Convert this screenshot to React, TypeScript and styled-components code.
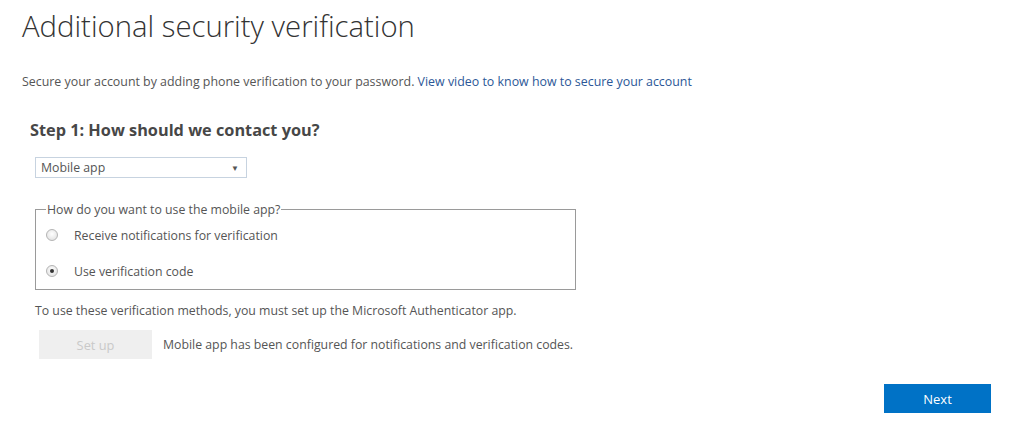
import { ReactElement } from 'react'
import styled, { createGlobalStyle } from 'styled-components'

const GlobalStyle = createGlobalStyle`
  html, body {
    margin: 0;
    padding: 0;
    background: #ffffff;
  }
  body {
    font-family: 'Open Sans', 'Noto Sans', sans-serif;
    color: #444;
    overflow: hidden;
  }
`

function App(): ReactElement {
  return (
    <>
      <GlobalStyle />
      <Page>
        <Title>Additional security verification</Title>
        <Intro>
          Secure your account by adding phone verification to your password.{' '}
          <IntroLink href="#">View video to know how to secure your account</IntroLink>
        </Intro>

        <StepBlock>
          <StepTitle>Step 1: How should we contact you?</StepTitle>
          <SelectBox>
            <span>Mobile app</span>
            <Caret>▼</Caret>
          </SelectBox>

          <MethodSet>
            <legend>How do you want to use the mobile app?</legend>
            <RadioRow>
              <Radio />
              <RadioLabel>Receive notifications for verification</RadioLabel>
            </RadioRow>
            <RadioRow>
              <Radio checked />
              <RadioLabel>Use verification code</RadioLabel>
            </RadioRow>
          </MethodSet>

          <Note>To use these verification methods, you must set up the Microsoft Authenticator app.</Note>

          <SetupRow>
            <SetupButton disabled>Set up</SetupButton>
            <Note>Mobile app has been configured for notifications and verification codes.</Note>
          </SetupRow>
        </StepBlock>

        <Footer>
          <NextButton>Next</NextButton>
        </Footer>
      </Page>
    </>
  )
}

export default App

const Page = styled.div`
  width: 1024px;
  height: 444px;
  padding: 8px 0 0 22px;
  box-sizing: border-box;
`

const Title = styled.h1`
  margin: 0;
  font-size: 29.3px;
  font-weight: 300;
  line-height: 36px;
  color: #333;
`

const Intro = styled.p`
  margin: 30px 0 0;
  font-size: 12.4px;
  line-height: 16px;
  color: #555;
`

const IntroLink = styled.a`
  color: #2b5797;
  text-decoration: none;
`

const StepBlock = styled.div`
  padding-left: 8px;
  margin-top: 30px;
`

const StepTitle = styled.h2`
  margin: 0;
  font-size: 16.3px;
  font-weight: 700;
  line-height: 20px;
  color: #474747;
`

const SelectBox = styled.div`
  margin: 17px 0 0 5px;
  width: 212px;
  height: 21px;
  box-sizing: border-box;
  border: 1px solid #c7d3e0;
  display: flex;
  align-items: center;
  justify-content: space-between;
  padding: 0 7px 0 5px;
  font-size: 12.3px;
  color: #555;
`

const Caret = styled.span`
  font-size: 8px;
  color: #555;
`

const MethodSet = styled.fieldset`
  margin: 23px 0 0 5px;
  width: 541px;
  height: 89px;
  box-sizing: border-box;
  border: 1px solid #9a9a9a;
  padding: 0 10px;

  legend {
    font-size: 12.3px;
    color: #555;
    padding: 0 1px;
  }
`

const RadioRow = styled.label`
  display: flex;
  align-items: center;
  height: 20px;
  margin-top: 7px;

  & + & {
    margin-top: 16px;
  }
`

const Radio = styled.span<{ checked?: boolean }>`
  width: 12px;
  height: 12px;
  border-radius: 50%;
  box-sizing: border-box;
  border: 1px solid #b4b4b4;
  background: radial-gradient(circle at 50% 40%, #ffffff 0%, #dcdcdc 100%);
  position: relative;

  &::after {
    content: '';
    display: ${(p) => (p.checked ? 'block' : 'none')};
    position: absolute;
    left: 3px;
    top: 3px;
    width: 4px;
    height: 4px;
    border-radius: 50%;
    background: #333;
  }
`

const RadioLabel = styled.span`
  margin-left: 16px;
  font-size: 12.3px;
  color: #555;
`

const Note = styled.p`
  margin: 13px 0 0 5px;
  font-size: 12.3px;
  line-height: 16px;
  color: #555;
`

const SetupRow = styled.div`
  display: flex;
  align-items: center;
  margin-top: 11px;
  margin-left: 9px;

  ${Note} {
    margin: 0 0 0 11px;
  }
`

const SetupButton = styled.button`
  width: 113px;
  height: 29px;
  border: none;
  background: #efefef;
  color: #c9c9c9;
  font-family: inherit;
  font-size: 12.8px;
`

const Footer = styled.div`
  display: flex;
  justify-content: flex-end;
  padding-right: 33px;
  margin-top: 25px;
`

const NextButton = styled.button`
  width: 107px;
  height: 29px;
  border: none;
  background: #0072c6;
  color: #ffffff;
  font-family: inherit;
  font-size: 13px;
`
